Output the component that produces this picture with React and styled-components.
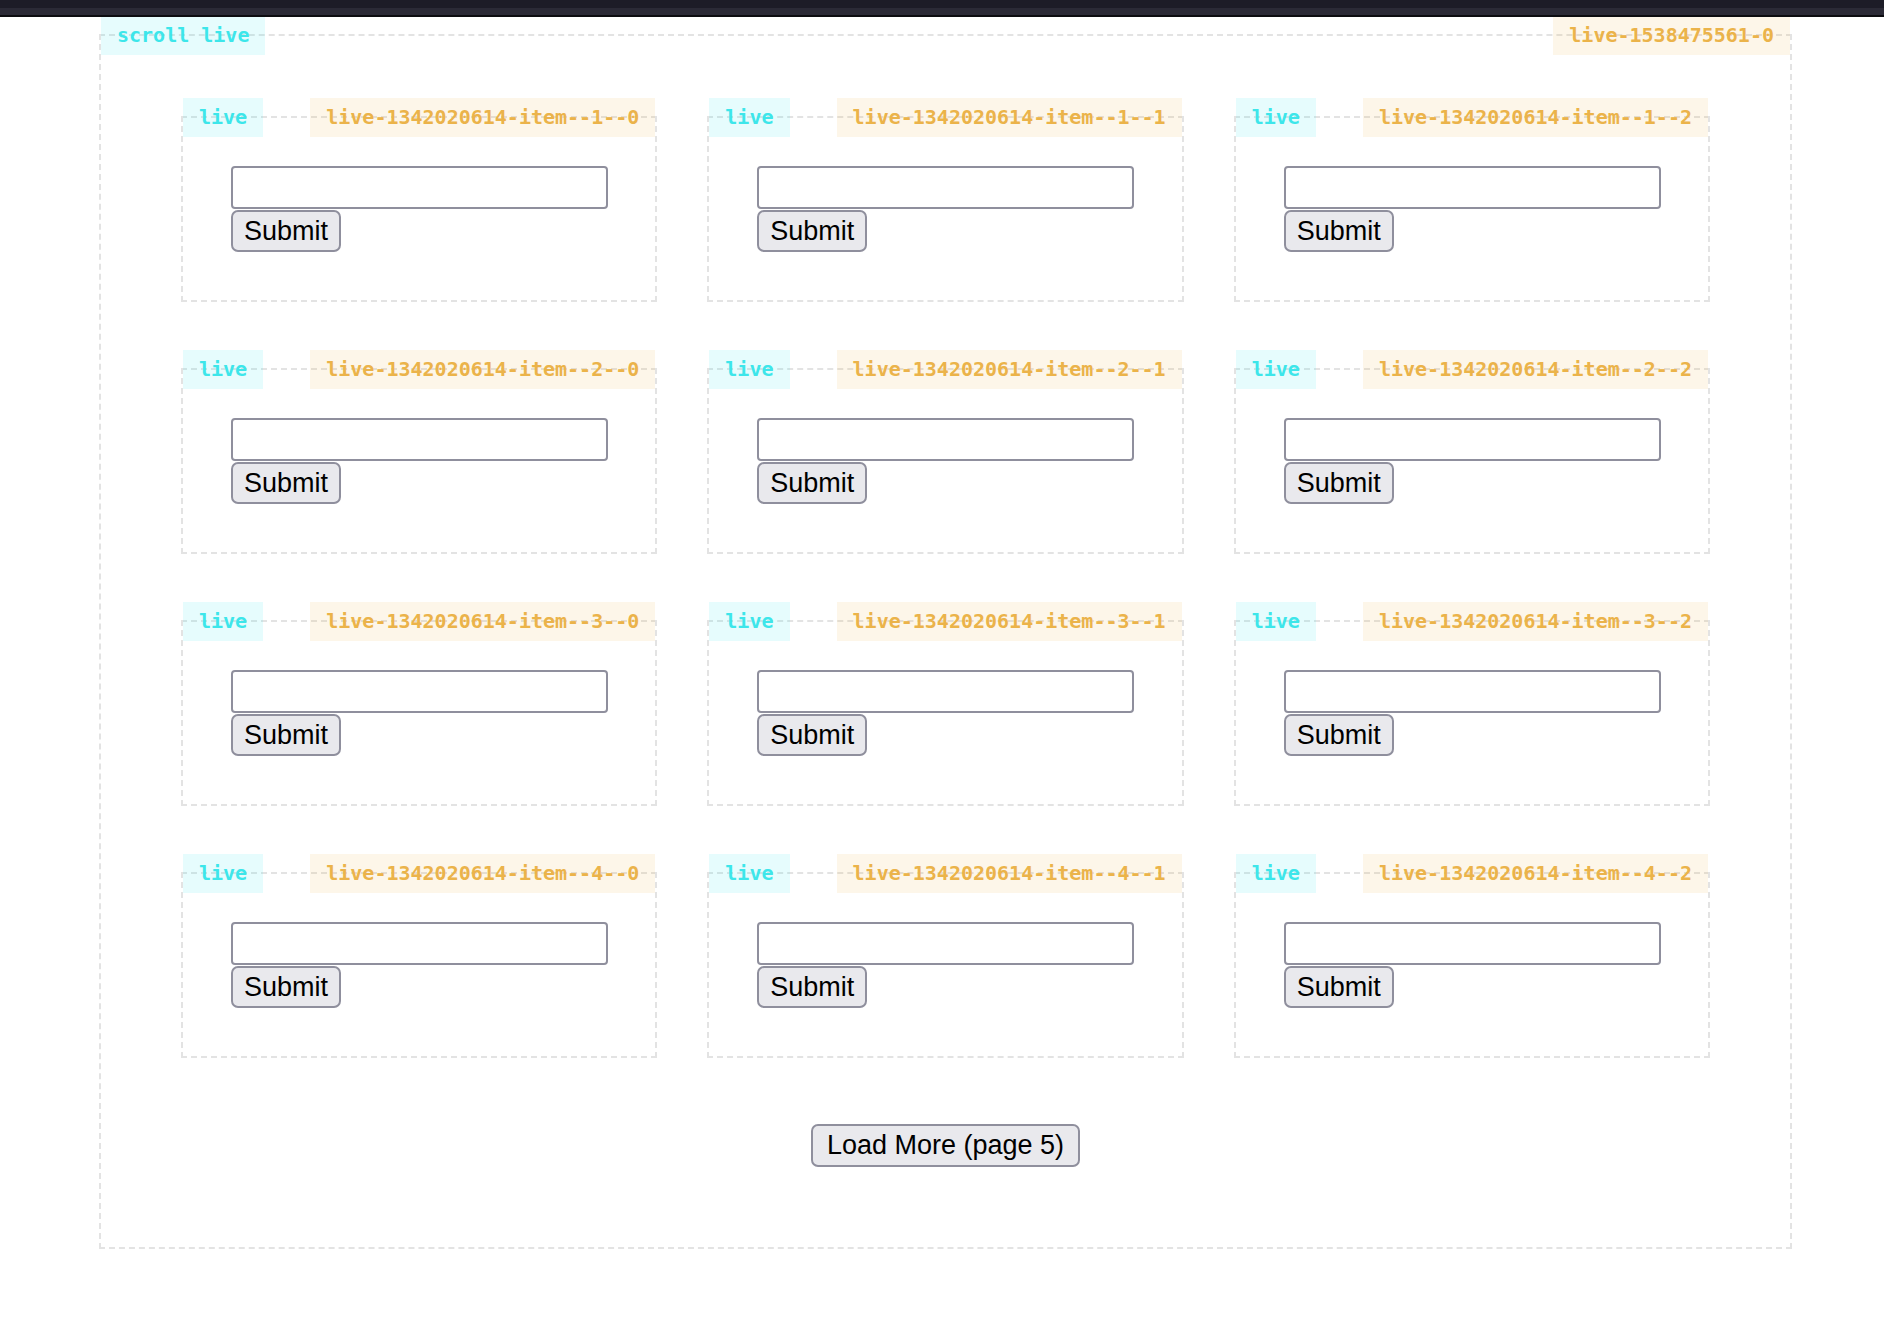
import React from "react";
import styled, { createGlobalStyle } from "styled-components";

const GlobalStyle = createGlobalStyle`
  html, body {
    margin: 0;
    padding: 0;
    background: #ffffff;
  }
  body {
    font-family: "Liberation Sans", Arial, sans-serif;
  }
`;

const TopBar = styled.div`
  position: relative;
  z-index: 2;
  height: 17px;
  background: linear-gradient(
    to bottom,
    #1d1c27 0px,
    #1d1c27 8px,
    #2b2a36 8px,
    #2b2a36 15px,
    #0c0c10 15px
  );
`;

const Page = styled.div`
  padding: 17px 0 0 99px;
`;

const Frame = styled.section`
  position: relative;
  box-sizing: border-box;
  width: 1693px;
  padding: 80px;
  border: 2px dashed #e3e3e3;
  display: flex;
  flex-direction: column;
  align-items: center;
  gap: 66px;
`;

const Tag = styled.span`
  position: absolute;
  top: -20px;
  ${(p) => (p.side === "right" ? "right: 0;" : "left: 0;")}
  height: 39px;
  line-height: 39px;
  padding: 0 16px;
  font-family: "DejaVu Sans Mono", "Liberation Mono", monospace;
  font-size: 20px;
  font-weight: 600;
  white-space: nowrap;
  color: ${(p) => (p.tone === "orange" ? "#ebb34a" : "#3de6ea")};
  background: ${(p) =>
    p.tone === "orange" ? "rgba(236, 179, 74, 0.12)" : "rgba(62, 232, 236, 0.13)"};
`;

const Grid = styled.div`
  align-self: stretch;
  display: grid;
  grid-template-columns: repeat(3, minmax(0, 1fr));
  column-gap: 50px;
  row-gap: 66px;
`;

const Card = styled.div`
  position: relative;
  min-width: 0;
  padding: 48px;
  border: 2px dashed #e3e3e3;
  display: flex;
  flex-direction: column;
  align-items: flex-start;
  gap: 1px;
`;

const TextField = styled.input`
  box-sizing: border-box;
  width: 377px;
  height: 43px;
  margin: 0;
  border: 2px solid #8f8f9d;
  border-radius: 4px;
  background: #ffffff;
`;

const Button = styled.button`
  box-sizing: border-box;
  height: ${(p) => (p.wide ? "43px" : "42px")};
  margin: 0;
  padding: ${(p) => (p.wide ? "0 14px" : "0 11px")};
  border: 2px solid #8f8f9d;
  border-radius: 7px;
  background: #e9e9ed;
  color: #000000;
  font-family: "Liberation Sans", Arial, sans-serif;
  font-size: 27px;
  line-height: 1;
`;

const rows = [1, 2, 3, 4];
const cols = [0, 1, 2];

const App = () => {
  return (
    <>
      <GlobalStyle />
      <TopBar />
      <Page>
        <Frame>
          <Tag tone="cyan">scroll live</Tag>
          <Tag tone="orange" side="right">live-1538475561-0</Tag>
          <Grid>
            {rows.map((r) =>
              cols.map((c) => (
                <Card key={`${r}-${c}`}>
                  <Tag tone="cyan">live</Tag>
                  <Tag tone="orange" side="right">
                    {`live-1342020614-item--${r}--${c}`}
                  </Tag>
                  <TextField type="text" />
                  <Button>Submit</Button>
                </Card>
              ))
            )}
          </Grid>
          <Button wide>Load More (page 5)</Button>
        </Frame>
      </Page>
    </>
  );
};

export default App;
